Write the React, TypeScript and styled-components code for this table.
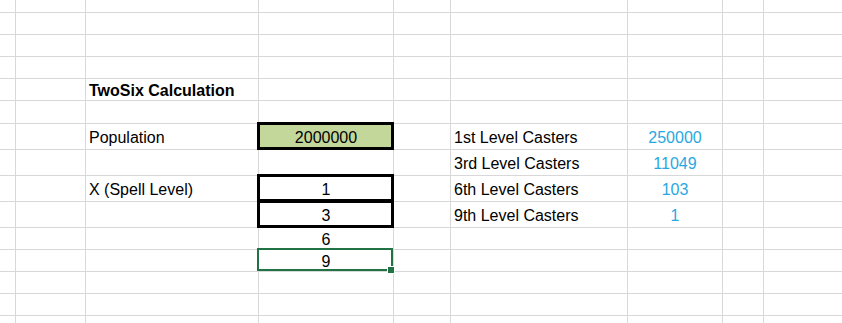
import styled, { createGlobalStyle } from "styled-components";

const GlobalStyle = createGlobalStyle`
  html, body {
    margin: 0;
    padding: 0;
    background: #ffffff;
    overflow: hidden;
  }
`;

const COLS = [16, 70, 173, 135, 57, 177, 95, 41, 100];
const ROWS = [13, 22, 22, 22, 22, 23, 26, 26, 26, 26, 22, 22, 22, 22, 22];

const Sheet = styled.div`
  display: grid;
  grid-template-columns: ${COLS.map((w) => `${w}px`).join(" ")};
  grid-template-rows: ${ROWS.map((h) => `${h}px`).join(" ")};
  width: 842px;
  height: 323px;
  overflow: hidden;
  font-family: "Liberation Sans", Arial, sans-serif;
  font-size: 16px;
  color: #000;
`;

const Cell = styled.div<{
  $center?: boolean;
  $fill?: string;
  $bold?: boolean;
  $blue?: boolean;
}>`
  position: relative;
  box-sizing: border-box;
  display: flex;
  align-items: center;
  justify-content: ${({ $center }) => ($center ? "center" : "flex-start")};
  padding: 3px 0 0 ${({ $center }) => ($center ? "0" : "3px")};
  border-right: 1px solid #d8d8d8;
  border-bottom: 1px solid #d8d8d8;
  background: ${({ $fill }) => $fill ?? "transparent"};
  font-weight: ${({ $bold }) => ($bold ? 700 : 400)};
  color: ${({ $blue }) => ($blue ? "#29a8e0" : "#000")};
  line-height: 18px;
  white-space: nowrap;
`;

const Box = styled.div`
  position: absolute;
  top: -2px;
  left: -2px;
  right: -1px;
  bottom: -1px;
  border: 3px solid #000;
  pointer-events: none;
  z-index: 1;
`;

const Selection = styled.div`
  position: absolute;
  top: -2px;
  left: -2px;
  right: 0;
  bottom: 0;
  border: 2px solid #217346;
  pointer-events: none;
  z-index: 2;
`;

const Handle = styled.span`
  position: absolute;
  right: -4px;
  bottom: -5px;
  width: 6px;
  height: 6px;
  background: #217346;
  border: 1px solid #ffffff;
`;

type Entry = {
  text: string;
  center?: boolean;
  fill?: string;
  bold?: boolean;
  blue?: boolean;
  box?: boolean;
  selected?: boolean;
};

const DATA: Record<string, Entry> = {
  "4,2": { text: "TwoSix Calculation", bold: true },
  "6,2": { text: "Population" },
  "6,3": { text: "2000000", center: true, fill: "#c4d79b", box: true },
  "6,5": { text: "1st Level Casters" },
  "6,6": { text: "250000", center: true, blue: true },
  "7,5": { text: "3rd Level Casters" },
  "7,6": { text: "11049", center: true, blue: true },
  "8,2": { text: "X (Spell Level)" },
  "8,3": { text: "1", center: true, box: true },
  "8,5": { text: "6th Level Casters" },
  "8,6": { text: "103", center: true, blue: true },
  "9,3": { text: "3", center: true, box: true },
  "9,5": { text: "9th Level Casters" },
  "9,6": { text: "1", center: true, blue: true },
  "10,3": { text: "6", center: true },
  "11,3": { text: "9", center: true, selected: true },
};

export default function App() {
  return (
    <>
      <GlobalStyle />
      <Sheet>
        {ROWS.map((_, r) =>
          COLS.map((_, c) => {
            const d = DATA[`${r},${c}`];
            return (
              <Cell
                key={`${r}-${c}`}
                $center={d?.center}
                $fill={d?.fill}
                $bold={d?.bold}
                $blue={d?.blue}
              >
                {d?.text}
                {d?.box && <Box />}
                {d?.selected && (
                  <Selection>
                    <Handle />
                  </Selection>
                )}
              </Cell>
            );
          })
        )}
      </Sheet>
    </>
  );
}
